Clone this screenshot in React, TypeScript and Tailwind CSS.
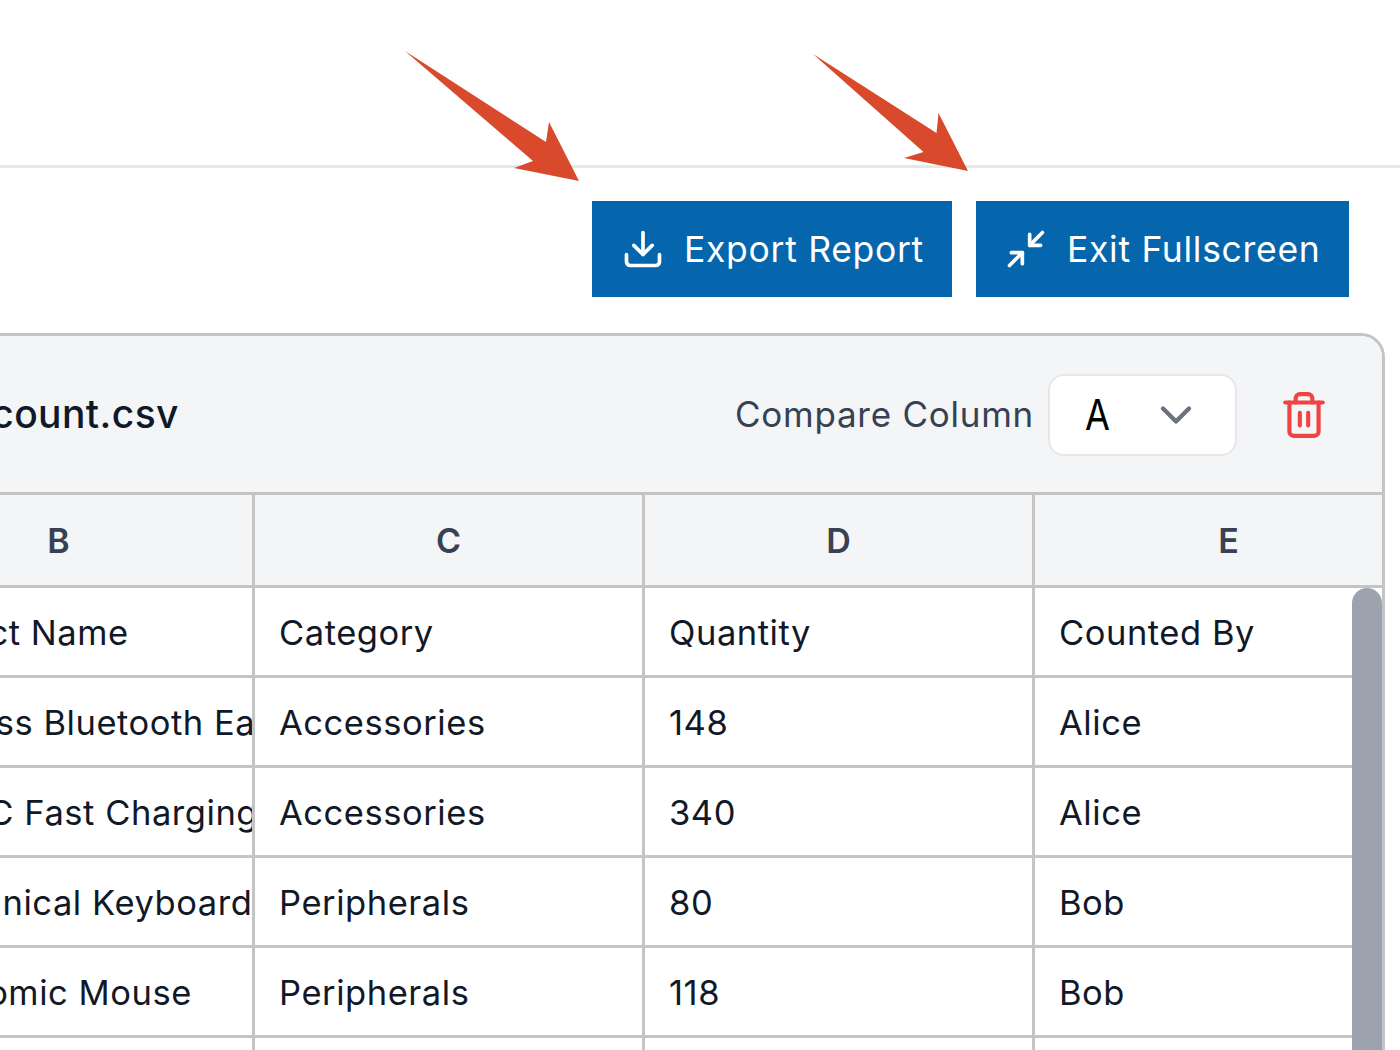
import { ChevronDown, Download, Minimize2, Trash2 } from 'lucide-react';

const columns = ['', 'B', 'C', 'D', 'E'];

const rows = [
  ['', 'Product Name', 'Category', 'Quantity', 'Counted By'],
  ['', 'Wireless Bluetooth Earbuds', 'Accessories', '148', 'Alice'],
  ['', 'Type-C Fast Charging Cable', 'Accessories', '340', 'Alice'],
  ['', 'Mechanical Keyboard', 'Peripherals', '80', 'Bob'],
  ['', 'Ergonomic Mouse', 'Peripherals', '118', 'Bob'],
  ['', '', '', '', ''],
];

// Callout arrows pointing at the two toolbar buttons
function Arrows() {
  return (
    <svg className="absolute left-0 top-0 z-10" width="1400" height="220" viewBox="0 0 1400 220">
      <polygon fill="#d84a2b" points="405,51 546,142 549,122 579,181 514,168 533,161" />
      <polygon fill="#d84a2b" points="813,54 936.5,133 938.5,113 968,171 904,158 923.5,152" />
    </svg>
  );
}

export default function App() {
  return (
    <div className="relative h-[1050px] w-[1400px] overflow-hidden bg-white font-['Inter',sans-serif]">
      <Arrows />
      <div className="h-[168px] border-b-[3px] border-[#e2e8f0]" />

      <div className="flex justify-end gap-6 pr-[51px] pt-[33px]">
        <button className="flex h-24 w-[360px] items-center gap-[19px] bg-[#0565ad] pl-[29px] text-[35.5px] tracking-[0.7px] text-white">
          <Download size={44} strokeWidth={2} />
          <span className="pt-[2px]">Export Report</span>
        </button>
        <button className="flex h-24 w-[373px] items-center gap-[19px] bg-[#0565ad] pl-[28px] text-[35.5px] tracking-[0.7px] text-white">
          <Minimize2 size={44} strokeWidth={2} />
          <span className="pt-[2px]">Exit Fullscreen</span>
        </button>
      </div>

      <div className="ml-[-300px] mt-9 w-[1685px] overflow-hidden rounded-tr-[24px] border-[3px] border-b-0 border-[#c4c4c4]">
        <div className="flex h-[159px] items-center justify-between border-b-[3px] border-[#c4c4c4] bg-[#f3f5f7] pl-[94px] pr-[53px]">
          <span className="text-[39px] font-medium tracking-[0.4px] text-[#111827]">inventory_count.csv</span>
          <div className="flex items-center pt-[1px]">
            <span className="text-[35px] tracking-[0.75px] text-[#374151]">Compare Column</span>
            <div className="ml-[14px] flex h-[82px] w-[189px] items-center justify-between rounded-2xl border-2 border-[#e5e7eb] bg-white pl-[35px] pr-[33px]">
              <span className="origin-left scale-x-[0.86] text-[42px] text-black">A</span>
              <ChevronDown size={52} strokeWidth={2} className="text-[#6b7280]" />
            </div>
            <Trash2 size={50} strokeWidth={2} className="ml-[42px] text-[#ef4444]" />
          </div>
        </div>

        <div className="relative grid grid-cols-[162px_390px_390px_390px_390px]">
          {columns.map((name, i) => (
            <div
              key={i}
              className="flex h-[93px] items-center justify-center border-b-[3px] border-r-[3px] border-[#c4c4c4] bg-[#f3f5f7] pt-[1px] text-[34px] font-semibold text-[#374151]"
            >
              {name}
            </div>
          ))}
          {rows.map((row, r) =>
            row.map((cell, c) => (
              <div
                key={`${r}-${c}`}
                className="flex h-[90px] items-center overflow-hidden whitespace-nowrap border-b-[3px] border-r-[3px] border-[#c4c4c4] pl-6 pt-[2px] text-[34.5px] tracking-[0.55px] text-[#111827]"
              >
                {cell}
              </div>
            ))
          )}
          <div className="absolute right-0 top-[93px] h-[600px] w-[30px] rounded-t-[15px] bg-[#9ca3af]" />
        </div>
      </div>
    </div>
  );
}
